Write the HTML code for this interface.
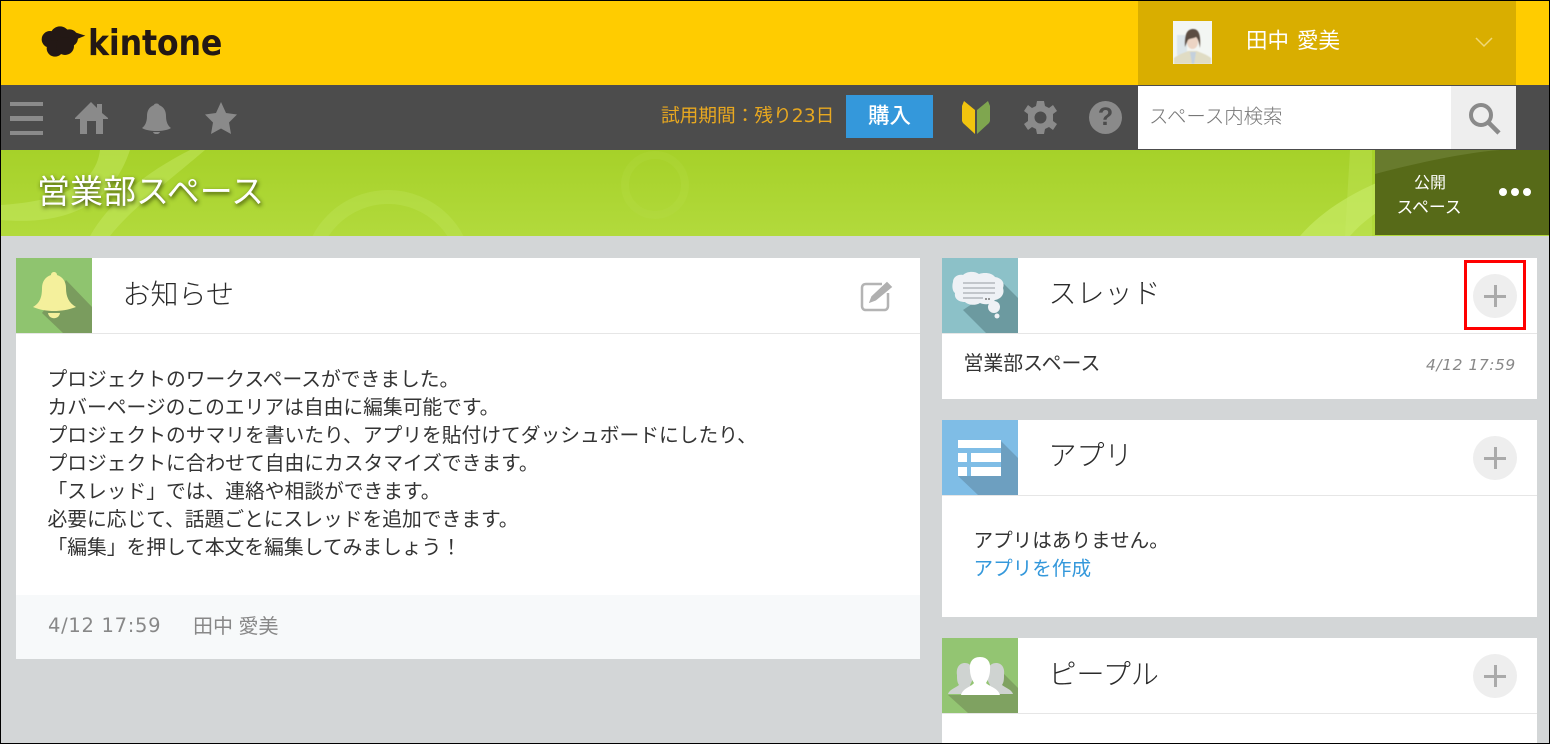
<!DOCTYPE html>
<html lang="ja"><head><meta charset="utf-8"><title>kintone</title>
<style>
html,body{margin:0;padding:0}
body{width:1550px;height:744px;position:relative;overflow:hidden;background:#d3d6d7;font-family:"Liberation Sans","Noto Sans CJK JP",sans-serif;font-weight:300;color:#333}
.a{position:absolute;white-space:nowrap;line-height:1}
.b{position:absolute}
svg{position:absolute;display:block}
.frame{position:absolute;left:0;top:0;width:1548px;height:742px;border:1px solid #000;z-index:50;pointer-events:none}
.card{position:absolute;background:#fff}
.line{position:absolute;height:1px;background:#e6e6e6}
.ttl{font-size:28px;color:#2a2a2a}
.plus{position:absolute;width:44px;height:44px;border-radius:50%;background:#eee}
.plus:before{content:"";position:absolute;left:11px;top:20.500px;width:22px;height:3px;background:#aaa}
.plus:after{content:"";position:absolute;left:20.500px;top:11px;width:3px;height:22px;background:#aaa}
</style></head><body>
<div class="frame"></div>
<div class="b" style="left:0;top:0;width:1550px;height:85px;background:#fc0"></div>
<div class="b" style="left:1138px;top:0;width:378px;height:85px;background:#d9ae00"></div>
<div class="b" style="left:0;top:85px;width:1550px;height:65px;background:#4c4c4c"></div>
<svg style="left:41px;top:25px" width="45" height="33.330" viewBox="123 75 135 100"><g fill="#231815"><circle cx="150" cy="118" r="25"/><circle cx="180" cy="108" r="29"/><circle cx="208" cy="114" r="26"/><circle cx="165" cy="145" r="25"/><circle cx="195" cy="138" r="27"/><path d="M222 96L256 107L224 120Z"/></g></svg>
<div class="a" style="left:88px;top:26px;font-size:36px;font-weight:700;color:#231815;letter-spacing:-.2px;font-family:'DejaVu Sans',sans-serif;transform:scaleX(.88);transform-origin:0 0">kintone</div>
<svg style="left:1173px;top:21px" width="39" height="43" viewBox="0 0 39 43"><defs><filter id="bl"><feGaussianBlur stdDeviation=".6"/></filter></defs><rect width="39" height="43" fill="#f3f6f3"/><g filter="url(#bl)"><rect x="4" y="14" width="10" height="20" fill="#dde6ea"/><path d="M1 43V37C6 33 11 32 15 30H24C28 32 33 33 38 37V43Z" fill="#e0dcc4"/><path d="M17 31L19 43H21L23 31Z" fill="#c3d0dd"/><ellipse cx="19.500" cy="21" rx="5.500" ry="7" fill="#ecd4c4"/><path d="M12 26C11 12 15 8 20 8C26 8 28 14 27 27C26 21 25 18 23 16C20 18 17 17 15 19C14 21 13 24 12 26Z" fill="#5c4d43"/></g></svg>
<div class="a" style="left:1246px;top:31px;font-size:21.500px;color:#fff;font-weight:400;word-spacing:2px">田中 愛美</div>
<svg style="left:1474px;top:36px" width="20" height="12" viewBox="0 0 20 12"><path d="M2 2L10 10L18 2" fill="none" stroke="#f0d878" stroke-width="1.500"/></svg>
<div class="b" style="left:10px;top:102px;width:33px;height:4px;background:#8a8a8a"></div>
<div class="b" style="left:10px;top:116px;width:33px;height:5px;background:#8a8a8a"></div>
<div class="b" style="left:10px;top:131px;width:33px;height:4px;background:#8a8a8a"></div>
<svg style="left:75px;top:102px" width="33" height="32" viewBox="0 0 33 32"><path fill="#8a8a8a" d="M0 16L16 0L22 6V2H27V11L33 16V17H28V32H21V19H12V32H5V17H0Z"/></svg>
<svg style="left:141px;top:102px" width="31" height="32" viewBox="0 0 31 32"><path fill="#8a8a8a" d="M13 3C13 1 18 1 18 3C23 5 25 9 25 14C25 20 27 24 30 26C27 28 21 29 15.500 29C10 29 4 28 1 26C4 24 6 20 6 14C6 9 8 5 13 3ZM12 30H19C18 33 13 33 12 30Z"/></svg>
<svg style="left:205px;top:102px" width="32" height="32" viewBox="0 0 32 32"><path fill="#8a8a8a" d="M16 0L21 11L32 12.500L24 20.500L26 32L16 26.500L6 32L8 20.500L0 12.500L11 11Z"/></svg>
<div class="a" style="left:661px;top:108px;font-size:18.700px;color:#e8a820;font-weight:400;font-family:'DejaVu Sans','Noto Sans CJK JP',sans-serif">試用期間：残り23日</div>
<div class="b" style="left:846px;top:95px;width:87px;height:43px;background:#3498db"></div>
<div class="a" style="left:868px;top:106px;font-size:21.500px;color:#fff;font-weight:500">購入</div>
<svg style="left:962px;top:101px" width="28" height="34" viewBox="0 0 28 34"><path fill="#f1c40f" d="M0 5L2 0L13 9V33L1 22L0 20Z"/><path fill="#7fa64f" d="M28 5L26 0L15 9V33L27 22L28 20Z"/></svg>
<svg style="left:1024px;top:101px" width="33" height="33" viewBox="0 0 33 33"><path fill="#8a8a8a" fill-rule="evenodd" d="M13 0H20L21 5L25 7L29 4L33 10L29 13V20L33 23L29 29L25 26L21 28L20 33H13L12 28L8 26L4 29L0 23L4 20V13L0 10L4 4L8 7L12 5ZM16.500 10.500A6 6 0 1 0 16.500 22.500A6 6 0 1 0 16.500 10.500Z"/></svg>
<div class="b" style="left:1089px;top:101px;width:33px;height:33px;border-radius:50%;background:#8a8a8a"></div>
<div class="a" style="left:1089px;top:105px;width:33px;text-align:center;font-size:25px;font-weight:700;color:#4c4c4c">?</div>
<div class="b" style="left:1138px;top:86px;width:313px;height:63px;background:#fff"></div>
<div class="b" style="left:1451px;top:86px;width:65px;height:63px;background:#eee"></div>
<div class="a" style="left:1149px;top:108px;font-size:19.400px;color:#777">スペース内検索</div>
<svg style="left:1468px;top:102px" width="33" height="33" viewBox="0 0 33 33"><circle cx="13" cy="13" r="10" fill="none" stroke="#8a8a8a" stroke-width="4"/><path d="M20 20L31 31" stroke="#8a8a8a" stroke-width="4.500"/></svg>
<svg style="left:0;top:150px" width="1550" height="86" viewBox="0 0 1550 86">
<defs><linearGradient id="g" x1="0" y1="0" x2="0" y2="1"><stop offset="0" stop-color="#a6d129"/><stop offset="1" stop-color="#b2da3c"/></linearGradient></defs>
<rect width="1550" height="86" fill="url(#g)"/>
<path d="M0 70C60 75 110 60 130 0H100C95 40 50 52 0 55Z" fill="#c4e862" opacity=".5"/>
<path d="M205 0C170 30 130 60 110 86H90C110 50 150 20 190 0Z" fill="#c4e862" opacity=".5"/>
<circle cx="388" cy="125" r="78" fill="none" stroke="#c4e862" stroke-width="14" opacity=".3"/>
<circle cx="655" cy="35" r="30" fill="none" stroke="#c4e862" stroke-width="8" opacity=".12"/>
<path d="M1300 86C1340 40 1410 15 1490 0H1550V10C1470 20 1390 40 1350 86Z" fill="#c9ec6a" opacity=".6"/>
<path d="M1350 0H1372V86H1345Z" fill="#c9ec6a" opacity=".3"/>
<rect x="1375" y="0" width="175" height="85" fill="#576a18"/>
<path d="M1375 24C1420 12 1470 2 1500 0H1375Z" fill="#6d7f33" opacity=".8"/>
</svg>
<div class="a" style="left:37px;top:175px;font-size:33px;color:#fff;font-weight:400;text-shadow:1px 2px 4px rgba(40,50,0,.85)">営業部スペース</div>
<div class="a" style="left:1414px;top:176px;font-size:16px;color:#fff;font-weight:400">公開</div>
<div class="a" style="left:1396.500px;top:200px;font-size:16.800px;color:#fff;font-weight:400">スペース</div>
<div class="b" style="left:1499px;top:188px;width:8px;height:8px;border-radius:50%;background:#fff"></div>
<div class="b" style="left:1511px;top:188px;width:8px;height:8px;border-radius:50%;background:#fff"></div>
<div class="b" style="left:1523px;top:188px;width:8px;height:8px;border-radius:50%;background:#fff"></div>

<div class="card" style="left:16px;top:258px;width:904px;height:401px"></div>
<div class="line" style="left:16px;top:333px;width:904px"></div>
<svg style="left:16px;top:258px" width="76" height="75" viewBox="0 0 76 75"><rect width="76" height="75" fill="#8fc46f"/><path d="M26 55L47 75H76V49L50 22Z" fill="#7a9c5e"/><path fill="#f4f09c" d="M35 17C35 13 41 13 41 17C47 19 50 24 50 30C50 39 53 45 60 49C52 52 45 53 38 53C31 53 24 52 17 49C24 45 26 39 26 30C26 24 29 19 35 17Z"/><path fill="#f4f09c" d="M32 55H44C43 62 33 62 32 55Z"/></svg>
<div class="a ttl" style="left:122.500px;top:281px">お知らせ</div>
<svg style="left:860px;top:279px" width="34" height="34" viewBox="0 0 34 34"><path d="M22 5H6C3.500 5 2 6.500 2 9V27C2 29.500 3.500 31 6 31H24C26.500 31 28 29.500 28 27V14" fill="none" stroke="#b4b4b4" stroke-width="2.500"/><path d="M8 25L11 17L27 2L33 8L16 22Z" fill="#b0b0b0" stroke="#fff" stroke-width="1"/></svg>
<div class="a" style="left:47.500px;top:366px;font-size:19.750px;line-height:28px;color:#333;font-weight:400">プロジェクトのワークスペースができました。<br>カバーページのこのエリアは自由に編集可能です。<br>プロジェクトのサマリを書いたり、アプリを貼付けてダッシュボードにしたり、<br>プロジェクトに合わせて自由にカスタマイズできます。<br>「スレッド」では、連絡や相談ができます。<br>必要に応じて、話題ごとにスレッドを追加できます。<br>「編集」を押して本文を編集してみましょう！</div>
<div class="b" style="left:16px;top:595px;width:904px;height:64px;background:#f7f9fa"></div>
<div class="a" style="left:48px;top:616px;font-size:19.500px;color:#888;font-weight:400;letter-spacing:.7px;font-family:'DejaVu Sans',sans-serif">4/12 17:59</div>
<div class="a" style="left:193px;top:617px;font-size:20px;color:#888;font-weight:400">田中 愛美</div>

<div class="card" style="left:942px;top:258px;width:595px;height:141px"></div>
<div class="line" style="left:942px;top:333px;width:595px"></div>
<svg style="left:942px;top:258px" width="76" height="75" viewBox="0 0 76 75"><rect width="76" height="75" fill="#8cc1c8"/><path d="M21 52L44 75H76V40L61 25Z" fill="#6c9aa0"/><path fill="#eef1f5" d="M11 24C11 19 16 16 21 17C25 13 33 13 37 16C43 14 50 15 53 19C60 20 63 25 61 30C63 36 59 41 53 42C49 47 42 47 38 45C33 48 26 47 23 44C17 44 12 41 13 35C10 33 10 27 11 24Z"/><circle cx="52" cy="49" r="6" fill="#eef1f5"/><circle cx="55" cy="58" r="2.500" fill="#eef1f5"/><path d="M21 25H53M21 30H53M21 35H53M21 40H41" stroke="#c2c6cb" stroke-width="2"/><path d="M43 41H48" stroke="#777" stroke-width="1.500" stroke-dasharray="2 1"/></svg>
<div class="a ttl" style="left:1048.500px;top:280px">スレッド</div>
<div class="plus" style="left:1473px;top:274px"></div>
<div class="b" style="left:1464px;top:260px;width:56px;height:64px;border:3px solid #f00;z-index:10"></div>
<div class="a" style="left:963.500px;top:355px;font-size:19.900px;color:#333;font-weight:400">営業部スペース</div>
<div class="a" style="left:1426px;top:358px;font-size:15px;font-style:italic;color:#888;letter-spacing:.55px;font-family:'DejaVu Sans',sans-serif;font-weight:400;transform:scaleX(1.03);transform-origin:0 0">4/12 17:59</div>

<div class="card" style="left:942px;top:420px;width:595px;height:197px"></div>
<div class="line" style="left:942px;top:495px;width:595px"></div>
<svg style="left:942px;top:420px" width="76" height="75" viewBox="0 0 76 75"><rect width="76" height="75" fill="#7fbde6"/><path d="M16 56L36 75H76V38L59 21V56Z" fill="#6d9fc0"/><path fill="#fff" d="M16 20H59V28H16ZM16 33H25V42H16ZM29 33H59V42H29ZM16 47H25V56H16ZM29 47H59V56H29Z"/></svg>
<div class="a ttl" style="left:1048.500px;top:442px">アプリ</div>
<div class="plus" style="left:1473px;top:436px"></div>
<div class="a" style="left:973.500px;top:527px;font-size:19.600px;line-height:28px;color:#333;font-weight:400">アプリはありません。<br><span style="color:#3498db">アプリを作成</span></div>

<div class="card" style="left:942px;top:638px;width:595px;height:106px"></div>
<div class="line" style="left:942px;top:713px;width:595px"></div>
<svg style="left:942px;top:638px" width="76" height="75" viewBox="0 0 76 75"><rect width="76" height="75" fill="#93c572"/><path d="M6 57L26 75H76V50L62 36L56 57Z" fill="#7fa261"/><path fill="#cfd3d1" d="M23 25C29 25 32 31 31 38C31 42 29 45 28 47C30 50 32 52 34 56H6C7 52 13 50 17 47C15 44 15 41 15 37C14 30 17 25 23 25ZM54 25C60 25 63 30 62 37C62 41 62 44 60 47C64 50 70 52 71 56H42C44 52 46 50 48 47C47 45 45 42 45 38C44 31 48 25 54 25Z"/><path fill="#fff" d="M38 19C46 19 49 25 48 32C48 37 46 42 44 45C48 49 56 50 58 57H19C21 50 29 49 32 45C30 42 28 37 28 32C27 25 30 19 38 19Z"/></svg>
<div class="a ttl" style="left:1048.500px;top:661px">ピープル</div>
<div class="plus" style="left:1473px;top:654px"></div>
</body></html>
